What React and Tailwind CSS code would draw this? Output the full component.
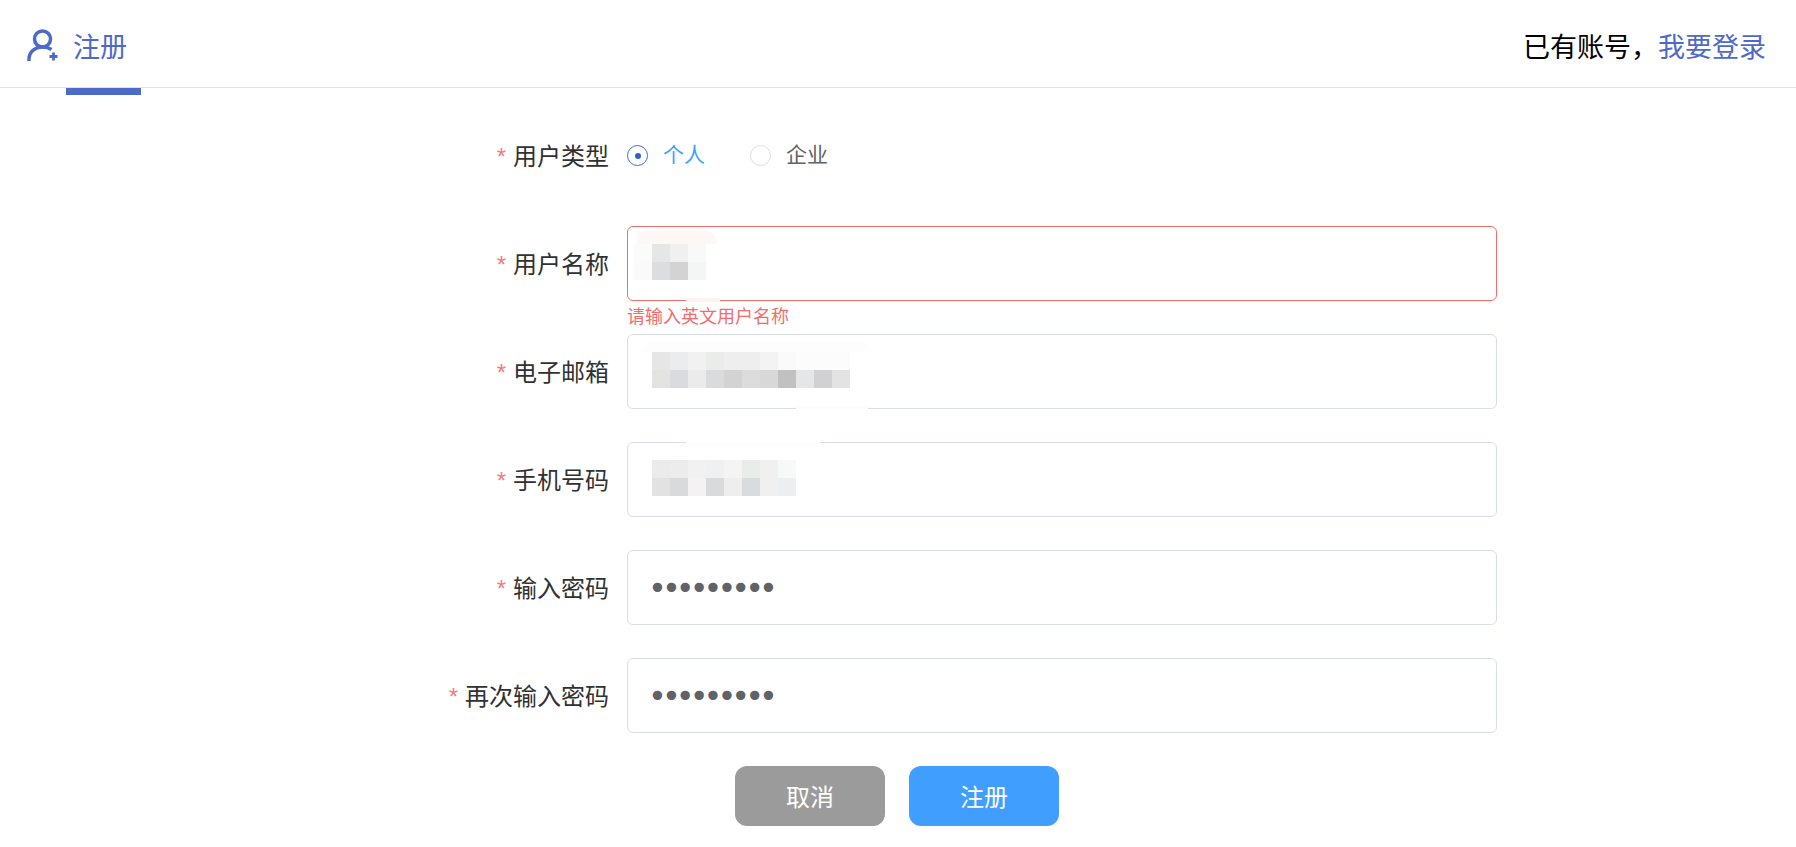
import React, { useState } from "react";

const mosaicOne = [
  ["#fbfbfb", "#e6e6e7", "#f0f0f1", "#f9f9fa"],
  ["#fafafa", "#dcddde", "#d2d3d2", "#f4f5f5"],
];
const mosaicTwo = [
  ["#e6e6e6", "#ebecee", "#f1f1f1", "#eaecea", "#eeeeee", "#eeeeee", "#f3f3f3", "#fafafa", "#fcfcfc", "#fcfcfc", "#fcfcfc"],
  ["#e3e3e1", "#d9dbde", "#ebebeb", "#d9dbdc", "#d3d3d3", "#dcdcdc", "#d8d8d8", "#c1c1c1", "#e5e6e8", "#d1d1d3", "#e3e3e3"],
];
const mosaicThree = [
  ["#ebebeb", "#ececec", "#f1f1f1", "#eff0f2", "#f4f4f4", "#eaecea", "#f0f0f1", "#f7f9f8"],
  ["#e2e2e2", "#d8dadc", "#f4f2f3", "#d8dadc", "#eeeeee", "#dadbdd", "#f0f0f0", "#eceef0"],
];

function Mosaic({ rows, offset }) {
  return (
    <div className={offset ? "relative mb-[3px] ml-[-18px] flex flex-col" : "relative mb-[3px] flex flex-col"}>
      {rows.map((row, i) => (
        <div key={i} className="flex">
          {row.map((color, j) => (
            <div key={j} className="h-[18px] w-[18px]" style={{ backgroundColor: color }} />
          ))}
        </div>
      ))}
    </div>
  );
}

function UserPlusIcon() {
  return (
    <svg width="32" height="34" viewBox="0 0 32 34" fill="none" stroke="#4d69c9" strokeWidth="3.500" className="mt-[3px]">
      <circle cx="15.500" cy="11" r="8" />
      <path d="M2 33v-2c0-7 6-12 13.500-12 3.500 0 6.500 .8 9 2.500" />
      <path d="M26.500 24.500v8M22.500 28.500h8" strokeWidth="2.800" />
    </svg>
  );
}

function Row({ label, error, children }) {
  return (
    <div className="mb-[33px] flex h-[75px] items-center">
      <label className="w-[328px] pr-[18px] text-right text-[24px] leading-[34px] text-[#303133]">
        <span className="mr-[7px] font-['Liberation_Sans',sans-serif] text-[#fb7a7a]">*</span>
        {label}
      </label>
      <div className="relative h-full flex-1">
        {children}
        {error && (
          <div className="absolute left-0 top-full text-[18px] leading-[28px] text-[#f56c6c]">
            {error}
          </div>
        )}
      </div>
    </div>
  );
}

function Box({ invalid, children }) {
  return (
    <div
      className={
        "relative flex h-full items-center rounded-[6px] border bg-white px-[24px] " +
        (invalid ? "border-[#f56c6c]" : "border-[#d9dde8]")
      }
    >
      {children}
    </div>
  );
}

function Radio({ checked, label, onClick }) {
  return (
    <button type="button" onClick={onClick} className="flex items-center">
      <span
        className={
          "flex h-[21px] w-[21px] items-center justify-center rounded-full border bg-white " +
          (checked ? "border-[#3a6fd0]" : "border-[#dcdfe6]")
        }
      >
        {checked && <span className="h-[6px] w-[6px] rounded-full bg-[#2f62c8]" />}
      </span>
      <span className={"mb-[5px] ml-[15px] text-[21px] leading-[30px] " + (checked ? "text-[#409eff]" : "text-[#606266]")}>
        {label}
      </span>
    </button>
  );
}

function PasswordInput() {
  return (
    <input
      type="password"
      readOnly
      value="123456789"
      className="ml-[-4px] w-full bg-transparent font-['DejaVu_Sans',sans-serif] text-[32px] tracking-[-5px] text-[#606266] outline-none"
    />
  );
}

export default function App() {
  const [userType, setUserType] = useState("personal");

  return (
    <div className="relative min-h-[847px] bg-white font-['Noto_Sans_CJK_SC',sans-serif]">
      <header className="flex h-[88px] items-center justify-between border-b border-[#d8e1ec] pl-[27px] pr-[30px]">
        <div className="flex items-center text-[27px] leading-[40px] text-[#4d69c9]">
          <UserPlusIcon />
          <span className="ml-[14px] mt-[4px]">注册</span>
        </div>
        <div className="mt-[4px] text-[27px] leading-[40px] text-black">
          已有账号，<a className="text-[#4d69c9]">我要登录</a>
        </div>
      </header>
      <div className="absolute left-[66px] top-[88px] h-[7px] w-[75px] bg-[#4d69c9]" />

      <form className="mx-auto w-[1198px] pt-[30px]">
        <Row label="用户类型">
          <div className="flex h-full items-center gap-[45px]">
            <Radio checked={userType === "personal"} label="个人" onClick={() => setUserType("personal")} />
            <Radio checked={userType === "company"} label="企业" onClick={() => setUserType("company")} />
          </div>
        </Row>

        <Row label="用户名称" error="请输入英文用户名称">
          <Box invalid>
            <div className="absolute left-[9px] top-[3px] h-[14px] w-[80px] rounded-tl-[40px] rounded-tr-[60px] bg-[#fff6f6]" />
            <Mosaic rows={mosaicOne} offset />
            <div className="absolute bottom-[-2px] left-[58px] h-[4px] w-[34px] bg-[#fff3f3]" />
          </Box>
        </Row>

        <Row label="电子邮箱">
          <Box>
            <div className="absolute left-[14px] top-[7px] h-[10px] w-[230px] rounded-t-[20px] bg-[#fdfdfd]" />
            <Mosaic rows={mosaicTwo} />
            <div className="absolute bottom-[-1px] left-[168px] h-[3px] w-[72px] bg-[#fcfcfc]" />
          </Box>
        </Row>

        <Row label="手机号码">
          <Box>
            <div className="absolute left-[58px] top-[-1px] h-[6px] w-[134px] bg-[#fdfdfd]" />
            <Mosaic rows={mosaicThree} />
          </Box>
        </Row>

        <Row label="输入密码">
          <Box>
            <PasswordInput />
          </Box>
        </Row>

        <Row label="再次输入密码">
          <Box>
            <PasswordInput />
          </Box>
        </Row>

        <div className="flex justify-center gap-[24px] pr-[2px]">
          <button type="button" className="h-[60px] w-[150px] rounded-[12px] bg-[#9b9b9b] text-[24px] text-white">
            取消
          </button>
          <button type="button" className="h-[60px] w-[150px] rounded-[12px] bg-[#409eff] text-[24px] text-white">
            注册
          </button>
        </div>
      </form>
    </div>
  );
}
